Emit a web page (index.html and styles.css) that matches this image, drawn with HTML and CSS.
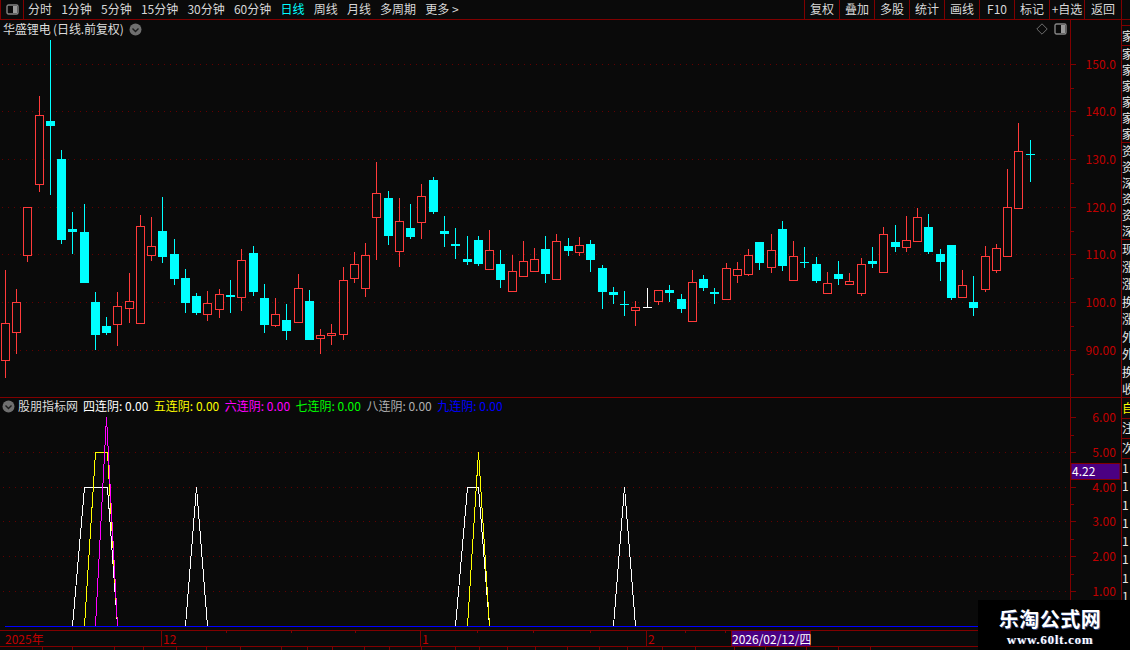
FILE: index.html
```html
<!DOCTYPE html>
<html lang="zh-CN">
<head>
<meta charset="utf-8">
<title>华盛锂电</title>
<link rel="stylesheet" href="styles.css">
</head>
<body>
<div class="app">
  <header class="toolbar">
    <div class="tb-toggle">
      <svg class="icon-panel" width="13" height="11" viewBox="0 0 13 11"><rect x="1" y="1" width="11" height="9" rx="1.5" class="ip-box"/><rect x="7" y="2" width="4" height="7" class="ip-fill"/></svg>
    </div>
    <nav class="tb-left">
      <span>分时</span><span>1分钟</span><span>5分钟</span><span>15分钟</span><span>30分钟</span><span>60分钟</span><span class="active">日线</span><span>周线</span><span>月线</span><span>多周期</span><span>更多 &gt;</span>
    </nav>
    <nav class="tb-right">
      <span class="btn">复权</span><span class="btn">叠加</span><span class="btn">多股</span><span class="btn">统计</span><span class="btn">画线</span><span class="btn">F10</span><span class="btn">标记</span><span class="btn">+自选</span><span class="btn btn-last">返回</span>
    </nav>
  </header>

  <div class="workspace">
    <main class="charts">
      <section class="pane pane-price">
        <div class="pane-head">
          <span class="title title-stock">华盛锂电 (日线.前复权)</span>
          <svg class="icon-circle" width="13" height="13" viewBox="0 0 13 13"><circle cx="6.5" cy="6.5" r="6" class="ic-bg"/><path d="M3.5 5.5l3 3 3-3" class="ic-ch"/></svg>
        </div>
        <div class="pane-tools">
          <svg width="12" height="12" viewBox="0 0 12 12"><path d="M6 .8L11.2 6 6 11.2.8 6z" class="diamond"/></svg>
          <svg class="icon-panel" width="13" height="12" viewBox="0 0 13 12"><rect x="1" y="1" width="11" height="10" rx="1.5" class="ip-box"/><rect x="7" y="2" width="4" height="8" class="ip-fill"/></svg>
        </div>
        <svg class="chart" width="1121" height="377" viewBox="0 20 1121 377">
          <path class="grid" d="M2 64.5H1070M2 111.5H1070M2 159.5H1070M2 207.5H1070M2 254.5H1070M2 302.5H1070M2 350.5H1070"/>
          <path class="axis" d="M1070.5 20V397M1071 64.5h5M1071 88.5h3M1071 111.5h5M1071 135.5h3M1071 159.5h5M1071 183.5h3M1071 207.5h5M1071 231.5h3M1071 254.5h5M1071 278.5h3M1071 302.5h5M1071 326.5h3M1071 350.5h5M1071 374.5h3"/>
          <g class="labels">
            <text x="1116" y="69">150.0</text>
            <text x="1116" y="116">140.0</text>
            <text x="1116" y="164">130.0</text>
            <text x="1116" y="212">120.0</text>
            <text x="1116" y="259">110.0</text>
            <text x="1116" y="307">100.0</text>
            <text x="1116" y="355">90.00</text>
          </g>
          <path class="wick-up" d="M5.5 270V378M16.5 289V354M27.5 207V262M39.5 96V192M117.5 292V346M129.5 273V323M140.5 215V324M151.5 217V261M207.5 291V321M219.5 289V318M241.5 249V311M275.5 298V327M298.5 274V322M320.5 329V354M331.5 324V345M343.5 267V340M354.5 252V283M365.5 243V297M376.5 162V260M399.5 198V267M421.5 184V239M489.5 230V269M512.5 255V291M523.5 241V276M534.5 248V271M556.5 234V279M579.5 237V256M635.5 301V326M658.5 290V305M692.5 270V321M726.5 263V299M737.5 262V283M748.5 249V276M771.5 234V273M793.5 241V280M827.5 272V293M849.5 273V285M861.5 258V296M883.5 227V272M906.5 216V252M917.5 208V241M962.5 270V297M985.5 246V292M996.5 244V273M1007.5 169V256M1018.5 123V208"/>
          <path class="body-up" d="M1.5 323.5h8v37h-8zM12.5 302.5h8v30h-8zM23.5 207.5h8v48h-8zM35.5 115.5h8v69h-8zM113.5 306.5h8v18h-8zM125.5 301.5h8v7h-8zM136.5 226.5h8v97h-8zM147.5 246.5h8v9h-8zM203.5 303.5h8v11h-8zM215.5 294.5h8v15h-8zM237.5 260.5h8v37h-8zM271.5 314.5h8v11h-8zM294.5 288.5h8v34h-8zM316.5 335.5h8v3h-8zM327.5 333.5h8v2h-8zM339.5 280.5h8v54h-8zM350.5 264.5h8v14h-8zM361.5 255.5h8v33h-8zM372.5 193.5h8v24h-8zM395.5 221.5h8v30h-8zM417.5 196.5h8v26h-8zM485.5 250.5h8v19h-8zM508.5 271.5h8v20h-8zM519.5 261.5h8v15h-8zM530.5 259.5h8v12h-8zM552.5 241.5h8v38h-8zM575.5 245.5h8v7h-8zM631.5 307.5h8v3h-8zM654.5 290.5h8v11h-8zM688.5 282.5h8v39h-8zM722.5 268.5h8v31h-8zM733.5 269.5h8v6h-8zM744.5 255.5h8v19h-8zM767.5 250.5h8v17h-8zM789.5 256.5h8v24h-8zM823.5 283.5h8v10h-8zM845.5 281.5h8v3h-8zM857.5 264.5h8v29h-8zM879.5 234.5h8v38h-8zM902.5 240.5h8v7h-8zM913.5 217.5h8v24h-8zM958.5 285.5h8v12h-8zM981.5 256.5h8v33h-8zM992.5 248.5h8v22h-8zM1003.5 207.5h8v49h-8zM1014.5 151.5h8v57h-8z"/>
          <path class="wick-down" d="M50.5 40V195M61.5 150V244M72.5 212V254M84.5 204V283M95.5 292V350M106.5 317V335M162.5 197V263M174.5 239V285M185.5 269V313M196.5 293V315M230.5 280V313M253.5 246V296M264.5 284V333M286.5 304V340M309.5 290V340M388.5 191V245M410.5 204V239M433.5 177V214M444.5 216V247M455.5 228V259M467.5 236V265M478.5 236V266M500.5 250V288M545.5 236V283M568.5 238V256M590.5 240V272M602.5 265V309M613.5 287V304M624.5 291V316M669.5 285V302M681.5 294V313M703.5 275V291M714.5 288V304M759.5 242V270M782.5 221V271M804.5 247V268M816.5 257V283M838.5 261V285M872.5 247V268M895.5 225V252M928.5 214V254M940.5 249V281M951.5 245V300M973.5 276V316M1030.5 140V182"/>
          <path class="body-down" d="M46 121h9v5h-9zM57 159h9v81h-9zM68 229h9v3h-9zM80 232h9v51h-9zM91 302h9v33h-9zM102 326h9v7h-9zM158 231h9v26h-9zM170 254h9v25h-9zM181 278h9v25h-9zM192 296h9v17h-9zM226 295h9v2h-9zM249 253h9v39h-9zM260 298h9v27h-9zM282 320h9v11h-9zM305 301h9v39h-9zM384 198h9v38h-9zM406 228h9v9h-9zM429 180h9v32h-9zM440 231h9v3h-9zM451 244h9v2h-9zM463 259h9v3h-9zM474 240h9v24h-9zM496 264h9v16h-9zM541 249h9v25h-9zM564 246h9v5h-9zM586 244h9v16h-9zM598 268h9v24h-9zM609 292h9v3h-9zM620 304h9v1h-9zM665 290h9v3h-9zM677 299h9v10h-9zM699 279h9v9h-9zM710 292h9v2h-9zM755 242h9v21h-9zM778 229h9v37h-9zM800 262h9v1h-9zM812 264h9v17h-9zM834 274h9v5h-9zM868 261h9v3h-9zM891 242h9v5h-9zM924 227h9v25h-9zM936 254h9v8h-9zM947 245h9v53h-9zM969 302h9v6h-9zM1026 154h9v1h-9z"/>
          <path class="wick-flat" d="M647.5 288V307"/>
          <path class="body-flat" d="M643 307h9v1h-9z"/>
        </svg>
      </section>

      <section class="pane pane-ind">
        <div class="pane-head pane-head-ind">
          <svg class="icon-circle" width="13" height="13" viewBox="0 0 13 13"><circle cx="6.5" cy="6.5" r="6" class="ic-bg"/><path d="M3.5 5.5l3 3 3-3" class="ic-ch"/></svg>
          <span class="title">股朋指标网</span>
          <span class="v-white">四连阴: 0.00</span>
          <span class="v-yellow">五连阴: 0.00</span>
          <span class="v-magenta">六连阴: 0.00</span>
          <span class="v-green">七连阴: 0.00</span>
          <span class="v-gray">八连阴: 0.00</span>
          <span class="v-blue">九连阴: 0.00</span>
        </div>
        <svg class="chart" width="1121" height="232" viewBox="0 398 1121 232">
          <path class="grid" d="M3 452.5H1070M3 487.5H1070M3 521.5H1070M3 556.5H1070M3 591.5H1070"/>
          <path class="axis" d="M1070.5 398V630M1071 417.5h5M1071 435.5h3M1071 452.5h5M1071 470.5h3M1071 487.5h5M1071 504.5h3M1071 521.5h5M1071 539.5h3M1071 556.5h5M1071 574.5h3M1071 591.5h5M1071 609.5h3"/>
          <g class="labels">
            <text x="1116" y="422">6.00</text>
            <text x="1116" y="457">5.00</text>
            <text x="1116" y="492">4.00</text>
            <text x="1116" y="526">3.00</text>
            <text x="1116" y="561">2.00</text>
            <text x="1116" y="596">1.00</text>
          </g>
          <g class="series">
            <path class="s-white" d="M72.5 626L84.5 487.5H107.5L117.5 626M185.5 626L196.5 487L207.5 626M455.5 626L467.5 487.5H478.5L489.5 626M613.5 626L624.5 487L635.5 626"/>
            <path class="s-yellow" d="M84.5 626L95.5 452.5H107.5L117.5 626M467.5 626L478.5 452L489.5 626"/>
            <path class="s-magenta" d="M95.5 626L106.5 417L117.5 626"/>
          </g>
          <path class="base" d="M5 626.5H978"/>
          <rect class="tag" x="1071" y="463.5" width="49" height="16"/>
          <text class="tag-text" x="1072" y="476">4.22</text>
        </svg>
      </section>

      <section class="date-axis">
        <span class="date-cell date-y">2025年</span>
        <span class="date-cell">12</span>
        <span class="date-cell">1</span>
        <span class="date-cell">2</span>
        <svg class="date-ticks" width="1121" height="3" viewBox="0 0 1121 3"><path d="M226.5 0v2M291.5 0v2M355.5 0v2M477.5 0v2M533.5 0v2M590.5 0v2M685.5 0v2M725.5 0v2"/></svg>
        <span class="date-tag">2026/02/12/四</span>
      </section>

      <footer class="tabs">
        <span class="tab tab-first">指标</span><span class="tab tab-mid">模板</span><span class="tab"></span><span class="tab"></span><span class="tab"></span><span class="tab"></span><span class="tab"></span><span class="tab"></span><span class="tab"></span><span class="tab"></span><span class="tab"></span><span class="tab"></span><span class="tab"></span><span class="tab"></span><span class="tab"></span><span class="tab"></span><span class="tab"></span><span class="tab"></span><span class="tab"></span><span class="tab"></span><span class="tab"></span><span class="tab"></span><span class="tab"></span><span class="tab"></span><span class="tab tab-mid tab-r">卜</span><span class="tab tab-cy">操作</span><span class="tab"></span>
      </footer>
    </main>

    <aside class="side">
      <div class="side-top">
        <div class="side-group side-head"><div class="side-row">家电</div></div>
        <div class="side-group">
          <div class="side-row">家电</div><div class="side-row">家具</div><div class="side-row">家电</div><div class="side-row">家居</div><div class="side-row">家具</div><div class="side-row">家电</div>
        </div>
        <div class="side-group">
          <div class="side-row">资金</div><div class="side-row">资产</div><div class="side-row">深证</div><div class="side-row">资金</div><div class="side-row">资产</div><div class="side-row">深证</div>
        </div>
        <div class="side-group side-fill">
          <div class="side-row">现量</div><div class="side-row">涨幅</div><div class="side-row">涨速</div><div class="side-row">换手</div><div class="side-row">涨跌</div><div class="side-row">外盘</div><div class="side-row">外盘</div><div class="side-row">换手</div><div class="side-row">收益</div>
        </div>
      </div>
      <div class="side-low">
        <div class="low-head low-yellow">自选</div>
        <div class="low-head">注册</div>
        <div class="low-head">次日</div>
        <div class="low-num">1</div><div class="low-num">1</div><div class="low-num">1</div><div class="low-num">1</div><div class="low-num">1</div><div class="low-num">1</div><div class="low-num">1</div><div class="low-num">1</div>
      </div>
    </aside>
  </div>

  <div class="watermark">
    <div class="wm-title">乐淘公式网</div>
    <div class="wm-url">www.60lt.com</div>
  </div>
</div>
</body>
</html>
```

FILE: styles.css
```css
* { box-sizing: border-box; }
html, body { margin: 0; padding: 0; background: #0a0a0a; }
body { font-family: "Noto Sans CJK SC", "Liberation Sans", sans-serif; font-size: 12px; color: #d8d8d8; }
svg { display: block; }

.app { position: relative; width: 1130px; height: 650px; overflow: hidden; display: flex; flex-direction: column; background: #0a0a0a; }

/* toolbar */
.toolbar { height: 20px; flex: none; display: flex; align-items: stretch; border-bottom: 1px solid #800000; line-height: 18px; }
.tb-toggle { width: 24px; flex: none; display: flex; align-items: center; justify-content: center; border-left: 1px solid #800000; border-right: 1px solid #800000; padding-bottom: 1px; }
.tb-left { display: flex; gap: 9.2px; padding-left: 4px; white-space: nowrap; }
.tb-left .active { color: #00ffff; }
.tb-right { margin-left: auto; margin-right: 8px; display: flex; }
.btn { width: 35px; text-align: center; border-left: 1px solid #800000; white-space: nowrap; }
.btn-last { width: 38px; border-right: 1px solid #800000; }
.ip-box { fill: none; stroke: #858585; stroke-width: 1.4; }
.ip-fill { fill: #9a9a9a; }

/* panes */
.workspace { flex: 1; display: flex; min-height: 0; }
.charts { width: 1121px; flex: none; display: flex; flex-direction: column; }
.pane { position: relative; flex: none; }
.pane-price { height: 378px; border-bottom: 1px solid #800000; }
.pane-ind { height: 233px; border-bottom: 1px solid #800000; }
.pane-head { position: absolute; left: 3px; top: 1px; height: 16px; display: flex; align-items: center; gap: 5px; line-height: 16px; white-space: nowrap; }
.pane-head-ind { left: 2px; top: 0; gap: 5.5px; }
.pane-head-ind .title { margin-left: -2.5px; margin-right: -.5px; }
.title { color: #dcdcdc; }
.title-stock { letter-spacing: -.12px; }
.pane-tools { position: absolute; left: 1036px; top: 3px; display: flex; align-items: center; gap: 6px; }
.diamond { fill: none; stroke: #6e6e6e; stroke-width: 1; }
.ic-bg { fill: #6f6f6f; }
.ic-ch { fill: none; stroke: #1c1c1c; stroke-width: 1.4; }
.v-white { color: #ffffff; }
.v-yellow { color: #ffff00; }
.v-magenta { color: #ff00ff; }
.v-green { color: #00ff00; }
.v-gray { color: #b0b0b0; }
.v-blue { color: #0000ff; }

/* chart drawing */
.chart path { fill: none; stroke-width: 1; shape-rendering: crispEdges; }
.chart .grid { stroke: #640000; stroke-dasharray: 1 5; }
.chart .axis { stroke: #800000; }
.labels text { fill: #c00000; font-size: 12px; text-anchor: end; font-family: "Noto Sans CJK SC", "Liberation Sans", sans-serif; letter-spacing: .1px; }
.chart .wick-up { stroke: #ff3a3a; }
.chart .body-up { stroke: #ff3a3a; fill: #0a0a0a; }
.chart .wick-down { stroke: #00ffff; }
.chart .body-down { fill: #00ffff; }
.chart .wick-flat { stroke: #ffffff; }
.chart .body-flat { fill: #ffffff; }
.chart .s-white { stroke: #ffffff; }
.chart .s-yellow { stroke: #ffff00; }
.chart .s-magenta { stroke: #ff00ff; }
.chart .base { stroke: #0000ff; }
.tag { fill: #4b0082; stroke: #800000; stroke-width: 1; }
.tag-text { fill: #ffffff; font-size: 12px; font-family: "Noto Sans CJK SC", "Liberation Sans", sans-serif; }

/* date axis */
.date-axis { position: relative; height: 16px; flex: none; display: grid; grid-template-columns: 161px 259px 226px 1fr; border-bottom: 1px solid #800000; color: #c00000; line-height: 15px; }
.date-cell { border-left: 1px solid #800000; padding-left: 1px; }
.date-y { border-left: 0; padding-left: 5px; }
.date-ticks { position: absolute; left: 0; top: 0; }
.date-ticks path { stroke: #800000; stroke-width: 1; fill: none; shape-rendering: crispEdges; }
.date-tag { position: absolute; left: 731px; top: 0; width: 80px; height: 15px; background: #4b0082; border-left: 1px solid #800000; border-right: 1px solid #800000; color: #ffffff; text-align: center; white-space: nowrap; }

/* bottom tabs */
.tabs { flex: 1; min-height: 0; overflow: hidden; display: grid; grid-template-columns: 43px 30px 42px 29px 33px 30px 34px 41px 26px 25px 32px 25px 32px 34px 24px 28px 28px 32px 32px 28px 35px 33px 39px 31px 41px 32px 32px; line-height: 18px; }
.tab { border-right: 1px solid #800000; white-space: nowrap; overflow: hidden; }
.tab-first { padding-left: 7px; }
.tab-mid { padding-left: 7px; }
.tab-r { padding-left: 20px; }
.tab-cy { color: #40c8ff; padding-left: 5px; }

/* right column */
.side { flex: 1; min-width: 0; display: flex; flex-direction: column; border-left: 1px solid #800000; overflow: hidden; white-space: nowrap; }
.side-top { height: 378px; flex: none; padding-top: 5px; display: flex; flex-direction: column; border-bottom: 1px solid #800000; }
.side-group { border-bottom: 1px solid #800000; }
.side-head { height: 21px; border-top: 1px solid #800000; line-height: 19px; }
.side-fill { border-bottom: 0; flex: 1; }
.side-row { height: 16px; line-height: 16px; color: #e8e8e8; }
.side-head .side-row { height: 19px; line-height: 19px; }
.side-fill .side-row { height: 17.5px; line-height: 17.5px; }
.side-low { flex: 1; padding-top: 1px; }
.low-head { height: 20px; line-height: 18px; border-bottom: 1px solid #800000; color: #e8e8e8; }
.low-yellow { color: #ffff00; }
.low-num { height: 18.3px; line-height: 18px; color: #e8e8e8; }

/* watermark */
.watermark { position: absolute; right: 0; bottom: 0; width: 152px; height: 50px; background: #000000; display: flex; flex-direction: column; align-items: center; color: #ffffff; font-weight: 700; padding: 5px 8px 0 0; }
.wm-title { font-size: 20px; line-height: 28px; letter-spacing: .5px; text-shadow: 1px 1px 0 #30407a; }
.wm-url { font-family: "Liberation Serif", serif; font-size: 13px; line-height: 14px; letter-spacing: .7px; text-shadow: 1px 0 0 #30407a; }
```
